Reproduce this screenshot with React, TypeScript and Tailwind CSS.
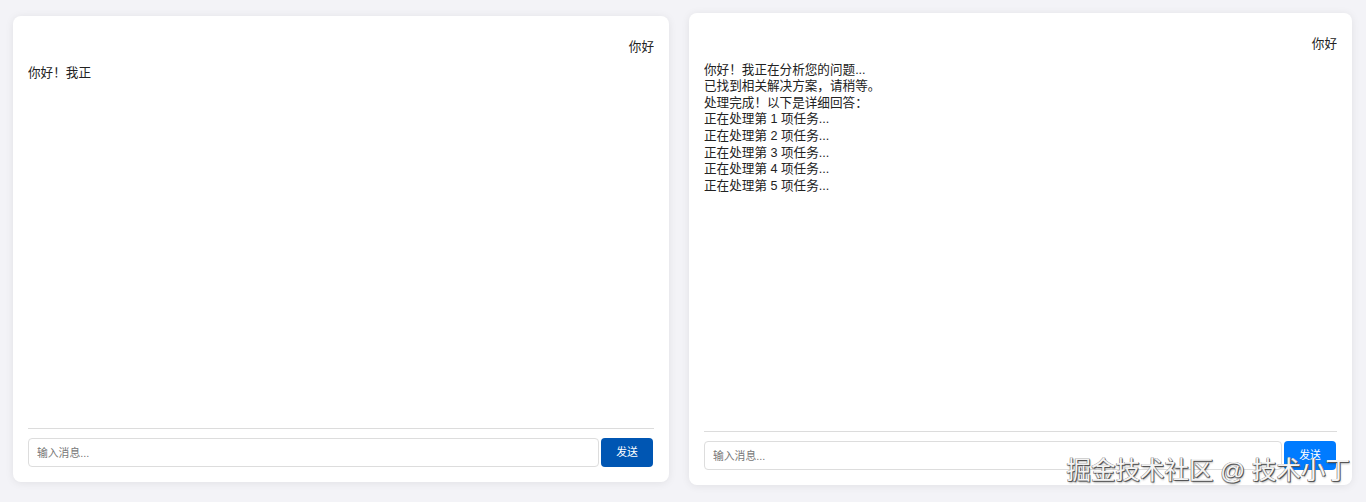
import React from "react";

const font = {
  fontFamily: '"Liberation Sans", "Noto Sans CJK SC", sans-serif',
};

function Card({
  lines,
  cls,
  btn,
}: {
  lines: string[];
  cls: string;
  btn: string;
}) {
  return (
    <div
      className={`${cls} bg-white rounded-[8px] shadow-[0_1px_8px_rgba(0,0,0,0.08)] p-[15px] flex flex-col`}
    >
      <div className="flex-1 overflow-hidden text-[12.6px] leading-[16.6px] text-[#222]">
        <div className="mt-[8px] mb-[9px] text-right">你好</div>
        <div>
          {lines.map((l, i) => (
            <div key={i}>{l}</div>
          ))}
        </div>
      </div>
      <div className="border-t border-[#dcdcdc] pt-[9px] flex items-center gap-[2px]">
        <input
          className="flex-1 h-[29px] border border-[#dddddd] rounded-[4px] px-[8px] text-[10.8px] outline-none placeholder:text-[#777]"
          placeholder="输入消息..."
          style={font}
        />
        <button
          className={`w-[52px] h-[29px] mr-[1px] rounded-[4px] ${btn} text-white text-[10.8px]`}
          style={font}
        >
          发送
        </button>
      </div>
    </div>
  );
}

export default function App() {
  return (
    <div
      className="w-[1366px] h-[502px] bg-[#f3f3f7] flex items-start pl-[13px] gap-[20px] relative overflow-hidden"
      style={font}
    >
      <Card
        lines={["你好！我正"]}
        cls="w-[656px] h-[466px] mt-[16px]"
        btn="bg-[#0056b3]"
      />
      <Card
        lines={[
          "你好！我正在分析您的问题...",
          "已找到相关解决方案，请稍等。",
          "处理完成！以下是详细回答：",
          "正在处理第 1 项任务...",
          "正在处理第 2 项任务...",
          "正在处理第 3 项任务...",
          "正在处理第 4 项任务...",
          "正在处理第 5 项任务...",
        ]}
        cls="w-[663px] h-[472px] mt-[13px]"
        btn="bg-[#007bff]"
      />
      <div
        className="absolute right-[16px] bottom-[17px] text-[24.5px] leading-[28px] text-[#f4f4f4] whitespace-nowrap"
        style={{
          textShadow:
            "1px 1px 0 #555, -0.5px -0.5px 0 #888, 0.5px -0.5px 0 #888, -0.5px 0.5px 0 #888, 1px 2px 2px rgba(0,0,0,0.3)",
        }}
      >
        掘金技术社区 @ 技术小丁
      </div>
    </div>
  );
}
